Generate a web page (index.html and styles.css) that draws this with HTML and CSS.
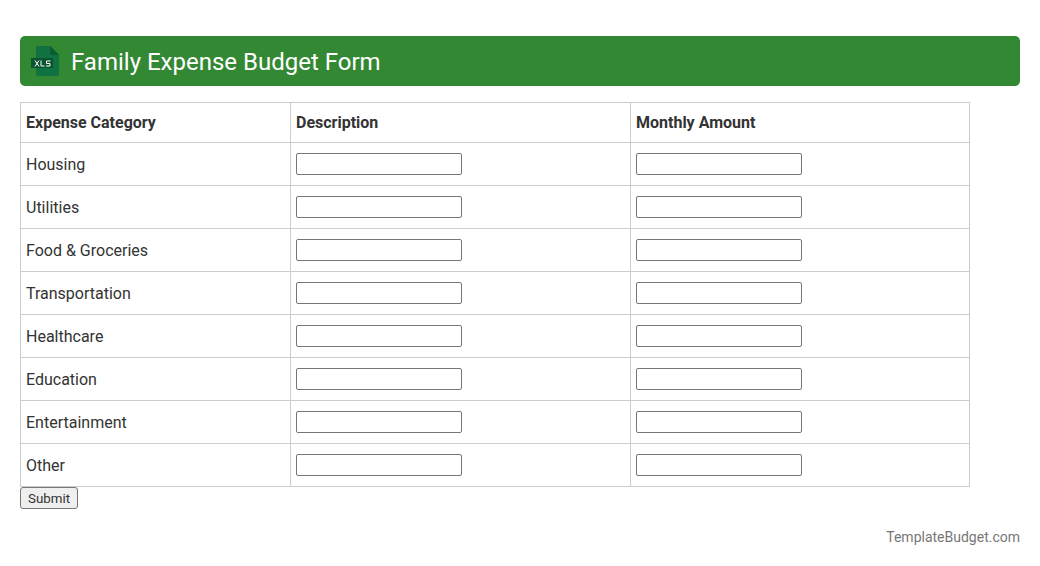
FILE: index.html
```html
<!DOCTYPE html>
<html lang="en">

<head>
    <meta charset="UTF-8">
    <title>Family Expense Budget Form</title>
    <link rel="stylesheet" href="styles.css">
</head>

<body>
    <!-- Title bar -->
    <h1 class="title-bar">
        <svg class="xls-icon" width="30" height="30" viewBox="0 0 30 30">
            <path d="M6 1Q6 0 7 0H20L29 9V28Q29 30 27 30H8Q6 30 6 28Z" fill="#107241"/>
            <path d="M20 0L29 9H22Q20 9 20 7Z" fill="#0b5a32"/>
            <rect x="1" y="12" width="22" height="10" fill="#0b5430"/>
            <path d="M5 14.5L9 20.5M9 14.5L5 20.5M11 14.5V20H14.5M20.5 15H16.5V17.5H20V20H16" fill="none" stroke="#fff" stroke-width="1"/>
        </svg>
        <span class="title-text">Family Expense Budget Form</span>
    </h1>

    <form>
        <table class="budget-table">
            <tr>
                <th class="col-category">Expense Category</th>
                <th class="col-desc">Description</th>
                <th>Monthly Amount</th>
            </tr>
            <tr>
                <td>Housing</td>
                <td><input type="text"></td>
                <td><input type="text"></td>
            </tr>
            <tr>
                <td>Utilities</td>
                <td><input type="text"></td>
                <td><input type="text"></td>
            </tr>
            <tr>
                <td>Food &amp; Groceries</td>
                <td><input type="text"></td>
                <td><input type="text"></td>
            </tr>
            <tr>
                <td>Transportation</td>
                <td><input type="text"></td>
                <td><input type="text"></td>
            </tr>
            <tr>
                <td>Healthcare</td>
                <td><input type="text"></td>
                <td><input type="text"></td>
            </tr>
            <tr>
                <td>Education</td>
                <td><input type="text"></td>
                <td><input type="text"></td>
            </tr>
            <tr>
                <td>Entertainment</td>
                <td><input type="text"></td>
                <td><input type="text"></td>
            </tr>
            <tr>
                <td>Other</td>
                <td><input type="text"></td>
                <td><input type="text"></td>
            </tr>
        </table>
        <button type="submit" class="submit-btn">Submit</button>
    </form>

    <div class="credit">TemplateBudget.com</div>
</body>

</html>
```

FILE: styles.css
```css
body {
    font-family: Roboto, sans-serif;
    font-size: 16px;
    color: #333;
    background: #fff;
    margin: 0;
    padding: 36px 20px 0;
}

/* Title bar */
.title-bar {
    display: flex;
    align-items: center;
    gap: 11px;
    height: 50px;
    margin: 0 0 16px;
    padding: 0 10px;
    background: #338833;
    border-radius: 5px;
    color: #fff;
    font-size: 24px;
    font-weight: 400;
}

.title-text {
    padding-top: 2px;
}

.xls-icon {
    flex-shrink: 0;
}

/* Table */
.budget-table {
    width: 950px;
    border-collapse: collapse;
    table-layout: fixed;
}

.budget-table th,
.budget-table td {
    border: 1px solid #ccc;
    padding: 10px 5px;
    text-align: left;
}

.budget-table th {
    height: 19px;
    font-weight: bold;
}

.col-category {
    width: 259px;
}

.col-desc {
    width: 329px;
}

.budget-table input {
    display: block;
    width: 166px;
    height: 22px;
    box-sizing: border-box;
    margin: 0;
    border: 1px solid #767676;
    border-radius: 2px;
}

.submit-btn {
    display: block;
    width: 58px;
    height: 22px;
    padding: 0;
    font-family: Roboto, sans-serif;
    font-size: 13.33px;
    color: #333;
    background: #efefef;
    border: 1px solid #767676;
    border-radius: 3px;
}

/* Footer */
.credit {
    margin-top: 20px;
    text-align: right;
    font-size: 14px;
    color: #777;
}
```
